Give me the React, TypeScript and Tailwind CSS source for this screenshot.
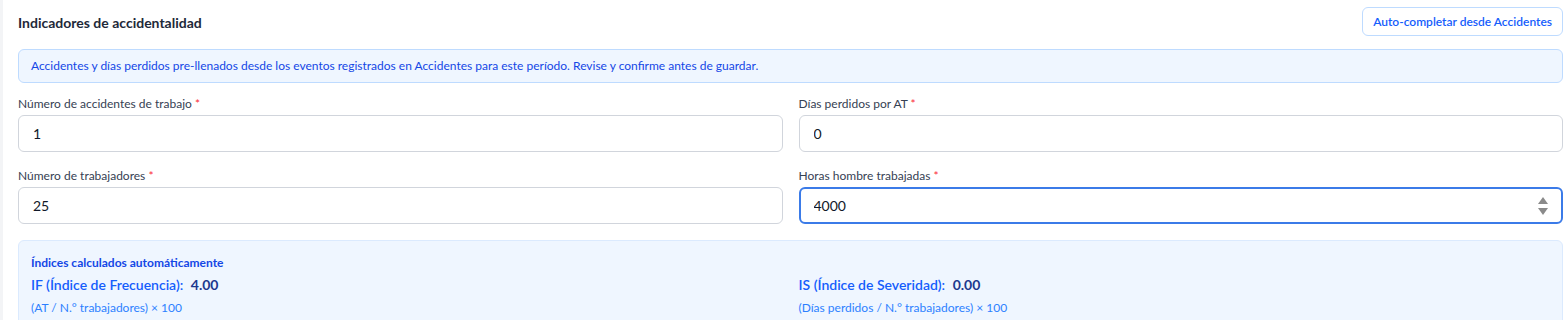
import React from "react";

const font = { fontFamily: 'Lato, "Noto Sans", sans-serif' };

function Field({
  label,
  value,
  focused,
}: {
  label: string;
  value: string;
  focused?: boolean;
}) {
  return (
    <div className="flex flex-col">
      <label className="mb-[3px] text-xs leading-4 text-gray-700">
        {label} <span className="text-red-500">*</span>
      </label>
      <div className="relative">
        <input
          readOnly
          value={value}
          className={
            focused
              ? "h-[37px] w-full rounded-md border-2 border-[#3b7be8] bg-white px-[13px] text-sm text-gray-900 outline-none"
              : "h-[37px] w-full rounded-md border border-gray-300 bg-white px-3.5 text-sm text-gray-900 outline-none"
          }
        />
        {focused && (
          <svg
            className="absolute right-[14px] top-1/2 -translate-y-1/2"
            width="12"
            height="22"
            viewBox="0 0 12 22"
            aria-hidden
          >
            <path d="M6 2 L11 9 L1 9 Z" fill="#8a8a8a" />
            <path d="M6 20 L11 13 L1 13 Z" fill="#8a8a8a" />
          </svg>
        )}
      </div>
    </div>
  );
}

export default function App() {
  return (
    <div className="min-h-screen bg-white" style={font}>
      <div className="border-l-[3px] border-gray-100 pl-[15px] pr-[5px] pt-[7px]">
        <div className="flex items-center justify-between">
          <h2 className="pt-0.5 text-sm font-bold text-gray-800">
            Indicadores de accidentalidad
          </h2>
          <button className="h-[29px] rounded-md border border-blue-200 bg-white px-2.5 text-xs font-semibold text-blue-600">
            Auto-completar desde Accidentes
          </button>
        </div>

        <div className="mt-[13px] rounded-md border border-blue-200 bg-blue-50 px-3 py-2 text-xs leading-4 text-blue-700">
          Accidentes y días perdidos pre-llenados desde los eventos registrados
          en Accidentes para este período. Revise y confirme antes de guardar.
        </div>

        <div className="mt-[13px] grid grid-cols-2 gap-x-4 gap-y-4">
          <Field label="Número de accidentes de trabajo" value="1" />
          <Field label="Días perdidos por AT" value="0" />
          <Field label="Número de trabajadores" value="25" />
          <Field label="Horas hombre trabajadas" value="4000" focused />
        </div>

        <div className="mt-4 rounded-md border border-blue-100 bg-blue-50 px-3 pb-3 pt-[14px]">
          <div className="text-xs font-bold leading-4 text-blue-700">
            Índices calculados automáticamente
          </div>
          <div className="mt-1 grid grid-cols-2 gap-4">
            <div>
              <div className="text-sm font-semibold leading-5 text-blue-600">
                IF (Índice de Frecuencia):{" "}
                <span className="ml-1 font-bold text-blue-900">4.00</span>
              </div>
              <div className="mt-[5px] text-xs leading-4 text-blue-500">
                (AT / N.° trabajadores) × 100
              </div>
            </div>
            <div>
              <div className="text-sm font-semibold leading-5 text-blue-600">
                IS (Índice de Severidad):{" "}
                <span className="ml-1 font-bold text-blue-900">0.00</span>
              </div>
              <div className="mt-[5px] text-xs leading-4 text-blue-500">
                (Días perdidos / N.° trabajadores) × 100
              </div>
            </div>
          </div>
        </div>
      </div>
    </div>
  );
}
